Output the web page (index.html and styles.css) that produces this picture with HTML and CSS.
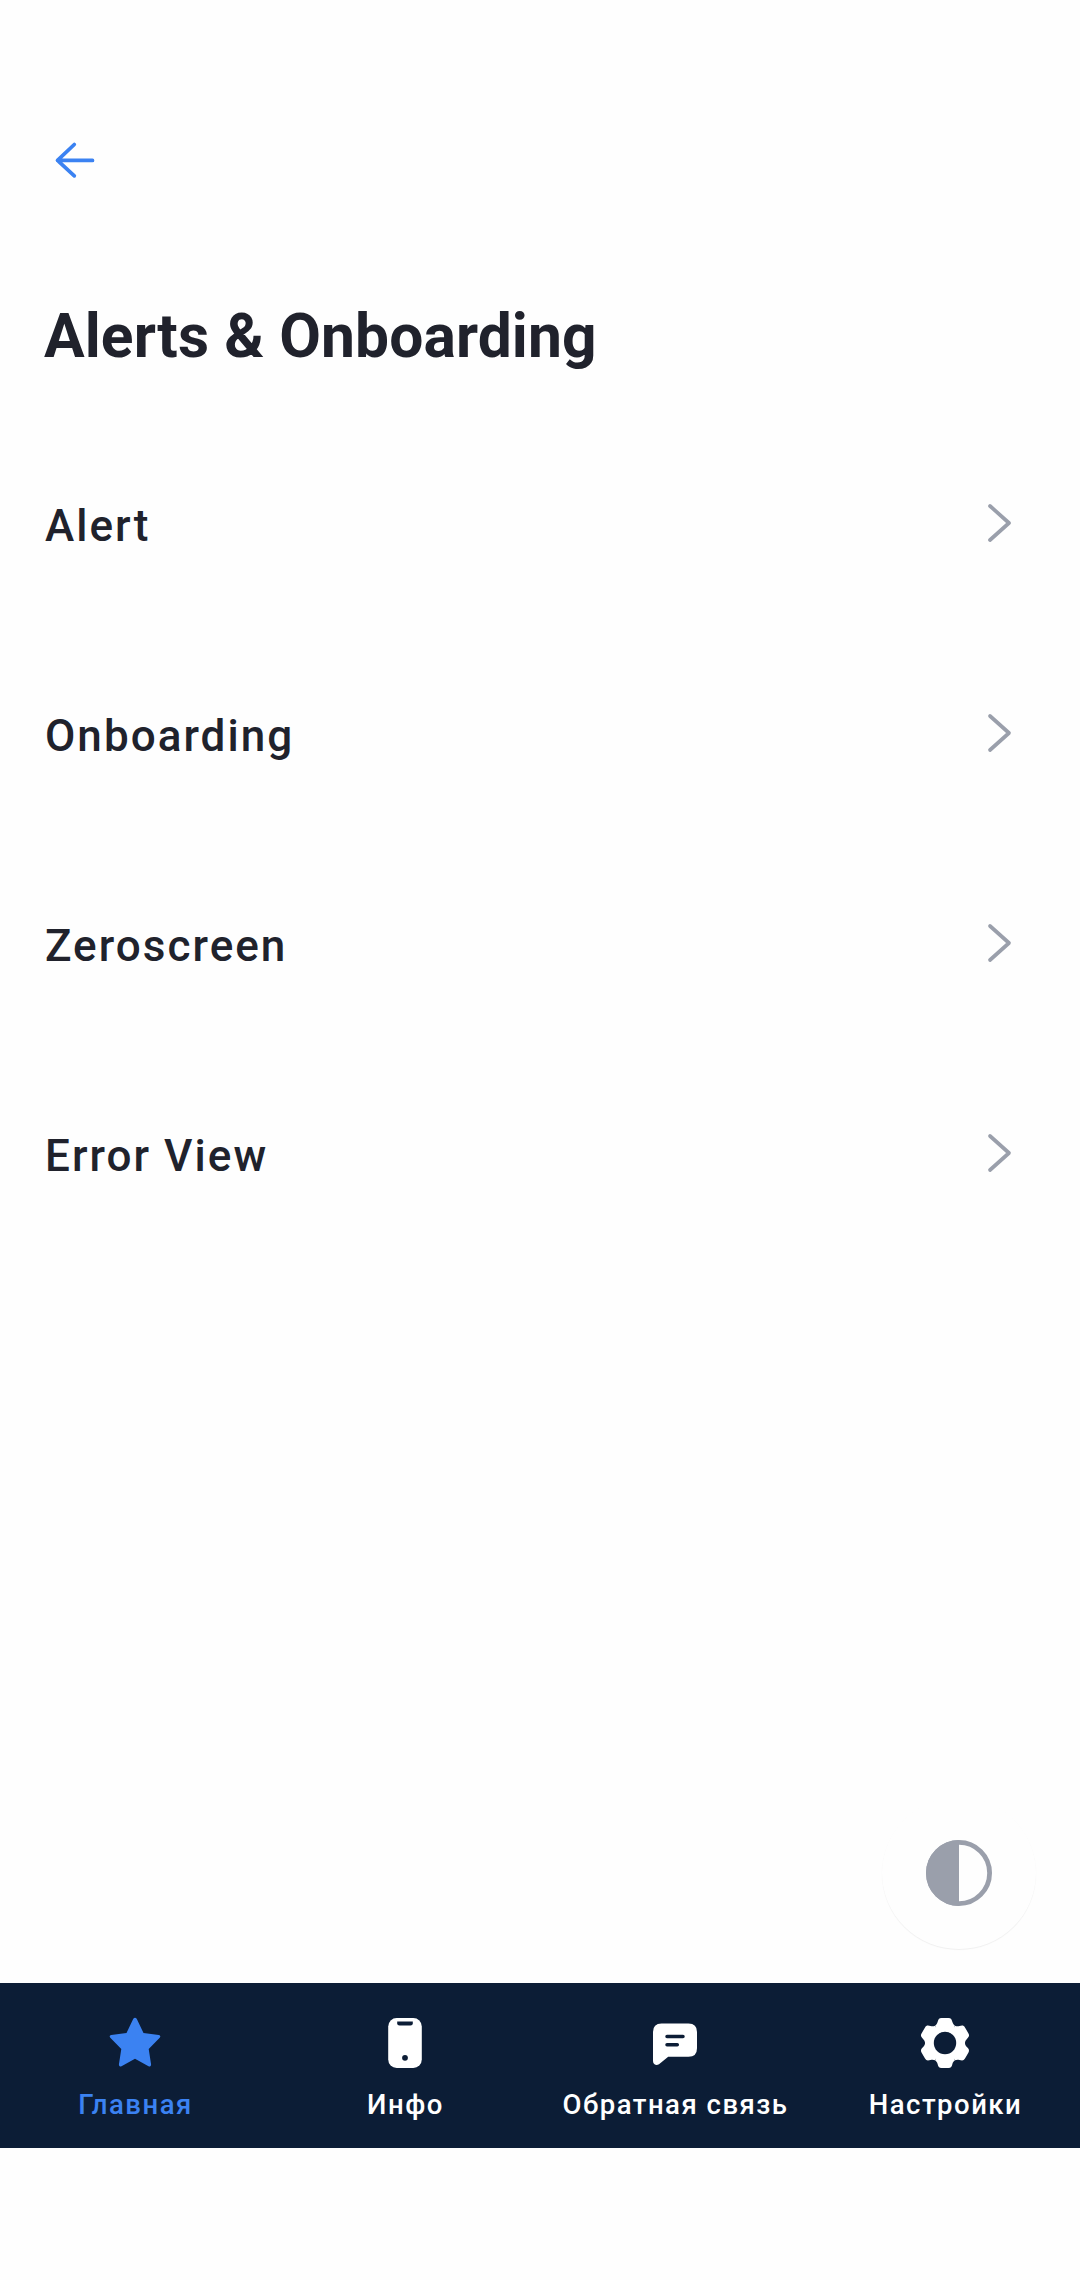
FILE: index.html
```html
<!DOCTYPE html>
<html lang="ru">
<head>
<meta charset="utf-8">
<title>Alerts &amp; Onboarding</title>
<link rel="stylesheet" href="styles.css">
</head>
<body>
<div class="screen">
  <header class="topbar">
    <svg class="icon" viewBox="0 0 66 66"><path class="back-line" d="M32.3 18.5 15.5 34.4 32.3 49.9M15.7 34.4H50.500"/></svg>
  </header>
  <main class="content">
    <h1 class="title">Alerts &amp; Onboarding</h1>
    <ul class="list">
      <li class="row"><span class="row-label">Alert</span><svg class="icon" viewBox="0 0 66 66"><path class="chevron" d="M24 16 43 33 24 50"/></svg></li>
      <li class="row"><span class="row-label">Onboarding</span><svg class="icon" viewBox="0 0 66 66"><path class="chevron" d="M24 16 43 33 24 50"/></svg></li>
      <li class="row"><span class="row-label">Zeroscreen</span><svg class="icon" viewBox="0 0 66 66"><path class="chevron" d="M24 16 43 33 24 50"/></svg></li>
      <li class="row"><span class="row-label">Error View</span><svg class="icon" viewBox="0 0 66 66"><path class="chevron" d="M24 16 43 33 24 50"/></svg></li>
    </ul>
    <div class="fab">
      <svg class="fab-icon" viewBox="0 0 66 66"><circle class="ring" cx="33" cy="33" r="30.6"/><path d="M33 0A33 33 0 0 0 33 66Z"/></svg>
    </div>
  </main>
  <nav class="tabs">
    <div class="tab active">
      <svg class="icon" viewBox="0 0 66 66"><path d="M31.3 8.7Q33 6.600 34.700 8.700L41.500 22.900 56.800 24.900Q59.300 25.600 57.700 27.700L46.700 39 49.100 54.500Q49 57.300 46.500 56.200L33 48.800 19.500 56.200Q17 57.300 16.900 54.500L19.300 39 8.300 27.700Q6.700 25.600 9.200 24.900L24.500 22.900Z"/></svg>
      <span class="tab-label">Главная</span>
    </div>
    <div class="tab">
      <svg class="icon" viewBox="0 0 66 66"><rect x="16.200" y="7.900" width="33.600" height="50" rx="8.500"/><path class="cut" d="M25.200 11.600H40.800V13.500Q40.800 15.600 38.500 15.600H27.500Q25.200 15.600 25.200 13.500Z"/><circle class="cut" cx="33" cy="47.800" r="2.900"/></svg>
      <span class="tab-label">Инфо</span>
    </div>
    <div class="tab">
      <svg class="icon" viewBox="0 0 66 66"><path d="M19.500 13.500H46.500Q55 13.500 55 22V38.300Q55 46.800 46.500 46.800H26.200L17 54.200Q14.500 55.800 12.500 54.300 11 53.200 11 51V22Q11 13.500 19.500 13.500Z"/><path class="cut-line" d="M25 26.500H41M25 34.700H35.300"/></svg>
      <span class="tab-label">Обратная связь</span>
    </div>
    <div class="tab">
      <svg class="icon" viewBox="0 0 66 66">
        <defs><path id="tooth" d="M0 0 -10 -17.300C-8.500 -18.200 -7.900 -19.500 -7.400 -21 -6.800 -23.500 -6 -25.100 -3.500 -25.100H3.500C6 -25.100 6.800 -23.500 7.400 -21 7.900 -19.500 8.500 -18.200 10 -17.300Z"/></defs>
        <g transform="translate(33 33)">
          <circle r="18"/>
          <use href="#tooth"/><use href="#tooth" transform="rotate(60)"/><use href="#tooth" transform="rotate(120)"/><use href="#tooth" transform="rotate(180)"/><use href="#tooth" transform="rotate(240)"/><use href="#tooth" transform="rotate(300)"/>
          <circle class="cut" r="11.200"/>
        </g>
      </svg>
      <span class="tab-label">Настройки</span>
    </div>
  </nav>
</div>
</body>
</html>
```
FILE: styles.css
```css
* { box-sizing: border-box; }
body {
  margin: 0;
  background: #fefefe;
  color: #20222c;
  font-family: Roboto, sans-serif;
}
.screen {
  display: flex;
  flex-direction: column;
  width: 1080px;
  height: 2280px;
  padding-bottom: 132px;
}
.icon {
  display: block;
  flex: none;
  width: 66px;
  height: 66px;
}
.topbar {
  height: 236px;
  padding: 126px 42px 0;
}
.back-line, .chevron, .cut-line, .ring {
  fill: none;
  stroke-linecap: round;
  stroke-linejoin: round;
}
.back-line { stroke: #3b82f2; stroke-width: 3.7; }
.chevron { stroke: #9a9fab; stroke-width: 3.7; }
.content {
  position: relative;
  flex: 1;
  padding-top: 65px;
}
.title {
  margin: 0 44px;
  font-size: 60.5px;
  line-height: 72px;
  font-weight: 700;
  letter-spacing: 0.1px;
}
.list {
  margin: 45px 0 0;
  padding: 0;
  list-style: none;
}
.row {
  display: flex;
  align-items: center;
  justify-content: space-between;
  height: 210px;
  padding: 0 48px 0 45px;
}
.row-label {
  padding-top: 6px;
  font-size: 44px;
  line-height: 56px;
  font-weight: 500;
  letter-spacing: 2.04px;
}
.fab {
  position: absolute;
  right: 44px;
  bottom: 34px;
  display: grid;
  place-items: center;
  width: 154px;
  height: 152px;
  border-radius: 50%;
  background: #fefefe;
  box-shadow: 0 1px 1px rgba(0, 0, 0, 0.06);
}
.fab-icon { width: 66px; height: 66px; fill: #9a9fab; }
.ring { stroke: #9a9fab; stroke-width: 4.800; }
.tabs {
  display: grid;
  grid-template-columns: repeat(4, 1fr);
  height: 165px;
  background: #0c1d36;
}
.tab {
  display: flex;
  flex-direction: column;
  align-items: center;
  padding-top: 27px;
  color: #fff;
}
.tab .icon { fill: currentColor; }
.tab.active { color: #3b82f2; }
.tab .cut { fill: #0c1d36; }
.tab .cut-line { fill: none; stroke: #0c1d36; stroke-width: 3.500; }
.tab-label {
  margin-top: 12px;
  padding-left: 1px;
  font-size: 27.5px;
  line-height: 34px;
  font-weight: 500;
  letter-spacing: 1.5px;
  white-space: nowrap;
}
```
